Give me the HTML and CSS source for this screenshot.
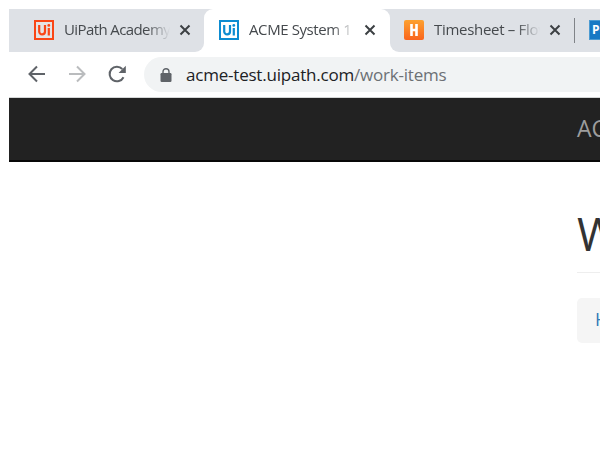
FILE: index.html
```html
<!DOCTYPE html>
<html lang="en">
<head>
<meta charset="utf-8">
<title>ACME System 1</title>
<link rel="stylesheet" href="styles.css">
</head>
<body>
<div class="browser">
  <div class="tabs">
    <div class="tab tab-first">
      <svg class="favicon" viewBox="0 0 20 20"><rect x="1" y="1" width="18" height="18" fill="#e5e3e4" stroke="#fa4616" stroke-width="2"/><path d="M5.200 5v6.400a2.900 2.900 0 0 0 5.800 0V5M14.800 8v7.500" fill="none" stroke="#fa4616" stroke-width="2.200"/><circle cx="14.800" cy="5.400" r="1.400" fill="#fa4616"/></svg>
      <span class="title title-first">UiPath Academy</span>
      <svg class="close" viewBox="0 0 12 12"><path d="M1.500 1.500l9 9m0-9l-9 9"/></svg>
    </div>
    <div class="active-wrap"><div class="tab tab-active">
      <svg class="favicon" viewBox="0 0 20 20"><rect x="1" y="1" width="18" height="18" fill="#fff" stroke="#0d8cd1" stroke-width="2"/><path d="M5.200 5v6.400a2.900 2.900 0 0 0 5.800 0V5M14.800 8v7.500" fill="none" stroke="#0d8cd1" stroke-width="2.200"/><circle cx="14.800" cy="5.400" r="1.400" fill="#0d8cd1"/></svg>
      <span class="title title-active">ACME System 1</span>
      <svg class="close" viewBox="0 0 12 12"><path d="M1.500 1.500l9 9m0-9l-9 9"/></svg>
    </div></div>
    <div class="tab tab-last">
      <svg class="favicon" viewBox="0 0 20 20"><defs><linearGradient id="g" x2="0" y2="1"><stop stop-color="#fda12f"/><stop offset="1" stop-color="#f9641d"/></linearGradient></defs><rect width="20" height="20" rx="2" fill="url(#g)"/><path d="M7.500 4v12M12.500 4v12M7 10h6" fill="none" stroke="#fff" stroke-width="2.600"/></svg>
      <span class="title title-last">Timesheet – Flow</span>
      <svg class="close" viewBox="0 0 12 12"><path d="M1.500 1.500l9 9m0-9l-9 9"/></svg>
      <span class="divider"></span>
      <span class="po">PO</span>
    </div>
  </div>
  <div class="toolbar">
    <svg class="tool" viewBox="0 0 18 18"><path d="M17 9H2M9 1.500L1.500 9 9 16.500"/></svg>
    <svg class="tool forward" viewBox="0 0 18 18"><path d="M1 9h15M9 1.500L16.500 9 9 16.500"/></svg>
    <svg class="tool" viewBox="0 0 18 18"><path d="M15.500 12.200A7.300 7.300 0 1 1 14.300 4"/><path class="solid" d="M17.800 .8V8h-7.200z"/></svg>
    <div class="address">
      <svg class="lock" viewBox="0 0 12 14"><rect x=".5" y="5" width="11" height="9" rx="1.200" fill="#5f6368"/><path d="M3 5.500V3.700a3 3 0 0 1 6 0v1.800" fill="none" stroke="#5f6368" stroke-width="1.400"/></svg>
      <span class="url">acme-test.uipath.com<span class="path">/work-items</span></span>
    </div>
  </div>
  <nav class="navbar"><span class="brand">ACME System 1</span></nav>
  <main class="content">
    <h1>Work Items</h1>
    <div class="breadcrumb"><a>Home</a></div>
  </main>
</div>
</body>
</html>
```

FILE: styles.css
```css
* { box-sizing: border-box; }
body { margin: 0; background: #fff; overflow: hidden; font-family: "Open Sans", sans-serif; }
.browser { width: 591px; height: 460px; margin: 9px 0 0 9px; overflow: hidden; }
.tabs { display: flex; height: 43px; }
.tab { display: flex; align-items: center; height: 43px; padding-bottom: 1px; flex: none; background: #dee1e6; }
.tab-first { width: 195px; padding-left: 25px; border-radius: 0 0 9px 0; }
.active-wrap { width: 186px; flex: none; background: linear-gradient(#dee1e6 50%, #fff 50%); }
.tab-active { padding-left: 15px; background: #fff; border-radius: 9px 9px 0 0; }
.tab-last { width: 210px; padding-left: 14px; border-radius: 0 0 0 9px; overflow: hidden; }
.favicon { width: 20px; height: 20px; margin-right: 10px; flex: none; }
.title { width: 106px; padding-bottom: 2px; flex: none; overflow: hidden; white-space: nowrap; font-size: 15px; line-height: 22px; color: #45494d; -webkit-mask-image: linear-gradient(90deg, #000 78%, transparent); mask-image: linear-gradient(90deg, #000 78%, transparent); }
.title-first { letter-spacing: -.6px; }
.title-active { letter-spacing: -.4px; }
.title-last { letter-spacing: -.3px; }
.close { width: 12px; height: 12px; margin-left: 9px; flex: none; fill: none; stroke: #3c4043; stroke-width: 2; }
.divider { width: 1px; height: 25px; margin-left: 13px; flex: none; background: #808388; }
.po { width: 20px; height: 20px; margin-left: 14px; padding-left: 2px; flex: none; overflow: hidden; background: #1779c4; border: 1px solid #4c9bd2; color: #fff; font: bold 12px/18px "Open Sans", sans-serif; }
.toolbar { display: flex; align-items: center; height: 45px; padding-left: 19px; }
.tool { width: 18px; height: 18px; margin: -2px 22px 0 0; flex: none; fill: none; stroke: #5f6368; stroke-width: 2; }
.tool .solid { fill: #5f6368; stroke: none; }
.forward { stroke: #babcbe; }
.address { display: flex; align-items: center; width: 456px; height: 35px; margin-left: -4px; padding-left: 16px; flex: none; background: #f1f3f4; border-radius: 18px 0 0 18px; }
.lock { width: 12px; height: 14px; margin-right: 14px; }
.url { color: #202124; font-size: 17px; line-height: 24px; letter-spacing: -.21px; white-space: nowrap; }
.path { color: #6c7074; }
.navbar { height: 65px; padding: 14px 0 0 568px; overflow: hidden; background: #222; border-top: 1px solid #d5d7d7; border-bottom: 2px solid #080808; }
.brand { display: block; color: #9d9d9d; font-size: 23px; line-height: 32px; white-space: nowrap; }
.content { margin: 0 0 0 568px; padding-top: 38px; }
h1 { height: 73px; margin: 0 0 25px; border-bottom: 1px solid #eee; color: #333; font-weight: 400; font-size: 45px; line-height: 68px; white-space: nowrap; }
.breadcrumb { width: 200px; height: 45px; padding-left: 18px; border-radius: 5px; background: #f5f5f5; color: #337ab7; font-size: 18px; line-height: 43px; }
```
